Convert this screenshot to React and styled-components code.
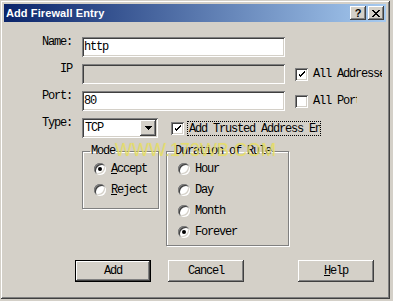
import styled, { createGlobalStyle } from "styled-components";

const GlobalStyle = createGlobalStyle`
  html, body {
    margin: 0;
    padding: 0;
    background: #d4d0c8;
  }
  body {
    width: 393px;
    height: 301px;
    overflow: hidden;
  }
`;

const raised = `
  box-shadow: inset -1px -1px #404040, inset 1px 1px #ffffff,
    inset -2px -2px #808080, inset 2px 2px #d4d0c8;
`;

const sunken = `
  box-shadow: inset 1px 1px #808080, inset -1px -1px #ffffff,
    inset 2px 2px #404040, inset -2px -2px #d4d0c8;
`;

const Window = styled.div`
  position: relative;
  box-sizing: border-box;
  width: 390px;
  height: 299px;
  padding: 4px;
  background: #d4d0c8;
  box-shadow: inset 1px 1px #d4d0c8, inset -1px -1px #404040,
    inset 2px 2px #ffffff, inset -2px -2px #808080;
  font-family: "Liberation Mono", "Courier New", monospace;
  font-size: 12px;
  letter-spacing: -1.2px;
  color: #000;
`;

const TitleBar = styled.div`
  display: flex;
  align-items: center;
  height: 18px;
  padding: 0 2px;
  background: linear-gradient(to right, #0a246a, #a6caf0);
`;

const Title = styled.div`
  font-family: "Liberation Sans", Arial, sans-serif;
  font-weight: bold;
  font-size: 11px;
  letter-spacing: 0.1px;
  color: #fff;
`;

const TitleButtons = styled.div`
  display: flex;
  gap: 2px;
  margin-left: auto;
`;

const TitleButton = styled.div`
  display: flex;
  align-items: center;
  justify-content: center;
  width: 16px;
  height: 14px;
  background: #d4d0c8;
  ${raised}
  font-family: "Liberation Sans", Arial, sans-serif;
  font-weight: bold;
  font-size: 11px;
  letter-spacing: 0;
  line-height: 14px;
`;

const Content = styled.div`
  padding-top: 15px;
`;

const FormGrid = styled.div`
  display: grid;
  grid-template-columns: 68px 203px 1fr;
  grid-auto-rows: 20px;
  column-gap: 10px;
  row-gap: 7px;
  align-items: center;
`;

const Label = styled.div`
  align-self: start;
  margin-top: -2px;
  text-align: right;
  line-height: 14px;
`;

const TextField = styled.div`
  box-sizing: border-box;
  display: flex;
  align-items: center;
  height: 20px;
  padding: 0 2px;
  background: ${(p) => (p.$disabled ? "#d4d0c8" : "#fff")};
  ${sunken}
  line-height: 14px;
`;

const CheckField = styled.div`
  display: flex;
  align-items: center;
  gap: ${(p) => p.$gap ?? 5}px;
  width: ${(p) => p.$w}px;
  overflow: hidden;
  white-space: nowrap;
  line-height: 14px;
`;

const Box = styled.div`
  flex: none;
  display: flex;
  align-items: center;
  justify-content: center;
  width: 13px;
  height: 13px;
  background: #fff;
  ${sunken}
`;

const FocusLabel = styled.span`
  box-sizing: border-box;
  height: 15px;
  padding: 0 1px;
  border: 1px dotted #000;
  overflow: hidden;
  flex: 1;
`;

const TypeControls = styled.div`
  grid-column: 2 / 4;
  display: flex;
  align-items: center;
  gap: 13px;
`;

const Select = styled.div`
  box-sizing: border-box;
  display: flex;
  align-items: center;
  width: 76px;
  height: 20px;
  padding: 2px 2px 2px 3px;
  background: #fff;
  ${sunken}
`;

const DropButton = styled.div`
  display: flex;
  align-items: center;
  justify-content: center;
  width: 16px;
  height: 16px;
  margin-left: auto;
  background: #d4d0c8;
  ${raised}
`;

const Groups = styled.div`
  display: flex;
  align-items: flex-start;
  gap: 7px;
  margin: 7px 0 0 78px;
`;

const GroupBox = styled.fieldset`
  box-sizing: border-box;
  min-inline-size: 0;
  width: ${(p) => p.$w}px;
  height: ${(p) => p.$h}px;
  margin: 0;
  padding: 1px 0 0 7px;
  border: 1px solid #808080;
  box-shadow: inset 1px 1px #fff, 1px 1px #fff;
`;

const Legend = styled.legend`
  padding: 0 1px;
  line-height: 12px;
`;

const RadioRow = styled.div`
  display: flex;
  align-items: center;
  gap: 5px;
  height: 21px;
  padding-left: 4px;
  line-height: 14px;
`;

const Radio = styled.div`
  position: relative;
  flex: none;
  width: 12px;
  height: 12px;
  border-radius: 50%;
  background: #fff;
  box-shadow: inset 1px 1px #808080, inset -1px -1px #ffffff,
    inset 2px 2px #404040, inset -2px -2px #d4d0c8;
  &::after {
    content: "";
    display: ${(p) => (p.$checked ? "block" : "none")};
    position: absolute;
    left: 4px;
    top: 4px;
    width: 4px;
    height: 4px;
    border-radius: 50%;
    background: #000;
  }
`;

const Buttons = styled.div`
  display: flex;
  gap: 17px;
  margin: 14px 0 0 71px;
`;

const Button = styled.div`
  box-sizing: border-box;
  display: flex;
  align-items: center;
  justify-content: center;
  width: 76px;
  height: 22px;
  margin-left: ${(p) => p.$offset || 0}px;
  background: #d4d0c8;
  border: ${(p) => (p.$default ? "1px solid #000" : "none")};
  ${raised}
  line-height: 14px;
`;

// watermark printed over the dialog in the source picture
const Watermark = styled.div`
  position: absolute;
  left: 115px;
  top: 141px;
  font-family: "Liberation Sans", Arial, sans-serif;
  font-size: 18px;
  line-height: 18px;
  letter-spacing: 0;
  color: rgba(236, 226, 96, 0.75);
  text-shadow: 0 0 1px rgba(200, 196, 120, 0.6);
  pointer-events: none;
`;

const Check = () => (
  <svg width="9" height="9" viewBox="0 0 9 9" shapeRendering="crispEdges">
    <path d="M1 3h1v3h1v1h1v-1h1v-1h1v-1h1v-1h1v-2h-1v1h-1v1h-1v1h-1v1h-1v-1h-1v-1h-1z" fill="#000" />
  </svg>
);

const CheckBox = ({ checked }) => <Box>{checked && <Check />}</Box>;

function App() {
  return (
    <>
      <GlobalStyle />
      <Window>
        <TitleBar>
          <Title>Add Firewall Entry</Title>
          <TitleButtons>
            <TitleButton>?</TitleButton>
            <TitleButton>
              <svg width="8" height="7" viewBox="0 0 8 7" shapeRendering="crispEdges">
                <path d="M0 0h2v1h1v1h2v-1h1v-1h2v1h-1v1h-1v1h-1v1h1v1h1v1h1v1h-2v-1h-1v-1h-2v1h-1v1h-2v-1h1v-1h1v-1h1v-1h-1v-1h-1v-1h-1z" fill="#000" />
              </svg>
            </TitleButton>
          </TitleButtons>
        </TitleBar>

        <Content>
          <FormGrid>
            <Label>Name:</Label>
            <TextField>http</TextField>
            <div />

            <Label>IP</Label>
            <TextField $disabled />
            <CheckField $w={87}>
              <CheckBox checked />
              All Addresses
            </CheckField>

            <Label>Port:</Label>
            <TextField>80</TextField>
            <CheckField $w={62}>
              <CheckBox />
              All Ports
            </CheckField>

            <Label>Type:</Label>
            <TypeControls>
              <Select>
                TCP
                <DropButton>
                  <svg width="7" height="4" viewBox="0 0 7 4" shapeRendering="crispEdges">
                    <path d="M0 0h7v1h-1v1h-1v1h-1v1h-1v-1h-1v-1h-1v-1h-1z" fill="#000" />
                  </svg>
                </DropButton>
              </Select>
              <CheckField $w={150} $gap={3}>
                <CheckBox checked />
                <FocusLabel>Add Trusted Address Entry</FocusLabel>
              </CheckField>
            </TypeControls>
          </FormGrid>

          <Groups>
            <GroupBox $w={77} $h={64}>
              <Legend>Mode</Legend>
              <RadioRow>
                <Radio $checked />
                <span><u>A</u>ccept</span>
              </RadioRow>
              <RadioRow>
                <Radio />
                <span><u>R</u>eject</span>
              </RadioRow>
            </GroupBox>
            <GroupBox $w={123} $h={101}>
              <Legend>Duration of Rule</Legend>
              <RadioRow>
                <Radio />
                <span>Hour</span>
              </RadioRow>
              <RadioRow>
                <Radio />
                <span>Day</span>
              </RadioRow>
              <RadioRow>
                <Radio />
                <span>Month</span>
              </RadioRow>
              <RadioRow>
                <Radio $checked />
                <span>Forever</span>
              </RadioRow>
            </GroupBox>
          </Groups>

          <Buttons>
            <Button $default>Add</Button>
            <Button>Cancel</Button>
            <Button $offset={37}>
              <span><u>H</u>elp</span>
            </Button>
          </Buttons>
        </Content>

        <Watermark>WWW.173WB.COM</Watermark>
      </Window>
    </>
  );
}

export default App;
